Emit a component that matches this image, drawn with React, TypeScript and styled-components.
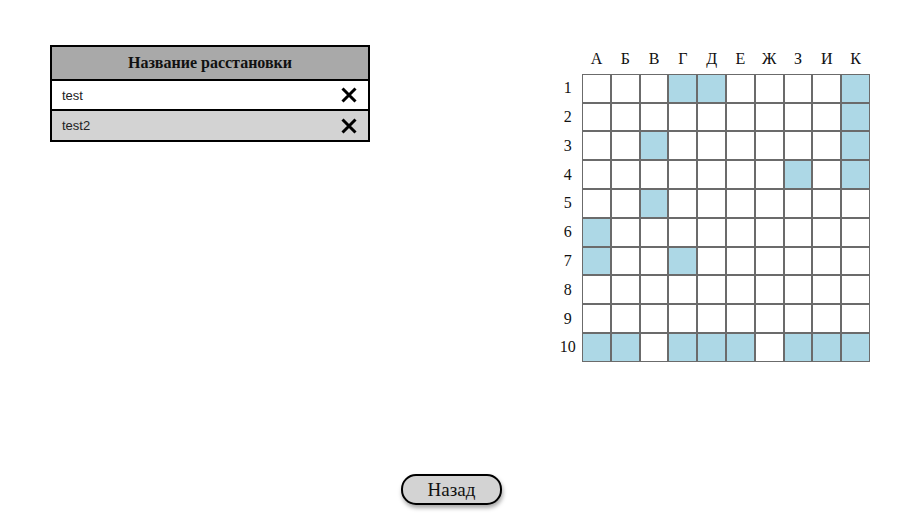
import React from "react";
import styled, { createGlobalStyle } from "styled-components";

const GlobalStyle = createGlobalStyle`
  html, body {
    margin: 0;
    padding: 0;
    background: #ffffff;
    font-family: "Liberation Serif", "Times New Roman", serif;
  }
`;

const colors = {
  header: "#a9a9a9",
  stripe: "#d3d3d3",
  ship: "#add8e6",
  line: "#6b6b6b",
};

const letters = ["А", "Б", "В", "Г", "Д", "Е", "Ж", "З", "И", "К"];

// ship cells, row -> columns (0-based)
const ships: Record<number, number[]> = {
  0: [3, 4, 9],
  1: [9],
  2: [2, 9],
  3: [7, 9],
  4: [2],
  5: [0],
  6: [0, 3],
  9: [0, 1, 3, 4, 5, 7, 8, 9],
};

const placements = ["test", "test2"];

const Page = styled.div`
  min-height: 100vh;
  display: flex;
  flex-direction: column;
  box-sizing: border-box;
`;

const Top = styled.div`
  display: flex;
  justify-content: space-between;
  align-items: flex-start;
  padding: 45px 41px 0 50px;
`;

const List = styled.div`
  width: 320px;
  box-sizing: border-box;
  border: 2px solid #000;
  display: flex;
  flex-direction: column;
`;

const ListHeader = styled.div`
  height: 32px;
  display: flex;
  align-items: center;
  justify-content: center;
  background: ${colors.header};
  border-bottom: 2px solid #000;
  font-family: "Liberation Serif", "Times New Roman", serif;
  font-weight: bold;
  font-size: 16px;
  color: #111;
`;

const ListRow = styled.div<{ $striped: boolean; $last: boolean }>`
  height: ${(p) => (p.$last ? "29px" : "28px")};
  display: flex;
  align-items: center;
  justify-content: space-between;
  padding: 0 11px 0 10px;
  background: ${(p) => (p.$striped ? colors.stripe : "#ffffff")};
  border-bottom: ${(p) => (p.$last ? "none" : "2px solid #000")};
  font-family: "Liberation Sans", Arial, sans-serif;
  font-size: 13px;
  color: #222;
`;

const RemoveButton = styled.button`
  border: none;
  background: none;
  padding: 0;
  width: 16px;
  height: 16px;
  display: flex;
  cursor: pointer;
`;

const Board = styled.div`
  display: grid;
  grid-template-columns: repeat(11, 28.8px);
  grid-auto-rows: 28.8px;
`;

const Label = styled.div`
  display: flex;
  align-items: center;
  justify-content: center;
  font-family: "Liberation Serif", "Times New Roman", serif;
  font-size: 16px;
  color: #111;
`;

const Cell = styled.div<{ $ship: boolean }>`
  box-sizing: border-box;
  border: 1px solid ${colors.line};
  background: ${(p) => (p.$ship ? colors.ship : "#ffffff")};
`;

const Footer = styled.div`
  margin-top: auto;
  display: flex;
  justify-content: center;
  padding: 0 8px 19px 0;
`;

const BackButton = styled.button`
  width: 101px;
  height: 31px;
  border: 2px solid #000;
  border-radius: 15px;
  background: ${colors.stripe};
  box-shadow: 1px 3px 4px rgba(0, 0, 0, 0.35);
  font-family: "Liberation Serif", "Times New Roman", serif;
  font-size: 19px;
  color: #111;
  cursor: pointer;
  padding: 0;
`;

const CrossIcon = () => (
  <svg width="16" height="16" viewBox="0 0 16 16">
    <path d="M1.5 1.5 L14.5 14.5 M14.5 1.5 L1.5 14.5" stroke="#000" strokeWidth="3" />
  </svg>
);

export default function App() {
  return (
    <>
      <GlobalStyle />
      <Page>
        <Top>
          <List>
            <ListHeader>Название расстановки</ListHeader>
            {placements.map((name, i) => (
              <ListRow key={name} $striped={i % 2 === 1} $last={i === placements.length - 1}>
                <span>{name}</span>
                <RemoveButton aria-label="Удалить">
                  <CrossIcon />
                </RemoveButton>
              </ListRow>
            ))}
          </List>
          <Board>
            <Label />
            {letters.map((l) => (
              <Label key={l}>{l}</Label>
            ))}
            {Array.from({ length: 10 }).map((_, r) => (
              <React.Fragment key={r}>
                <Label>{r + 1}</Label>
                {letters.map((l, c) => (
                  <Cell key={l} $ship={(ships[r] || []).includes(c)} />
                ))}
              </React.Fragment>
            ))}
          </Board>
        </Top>
        <Footer>
          <BackButton>Назад</BackButton>
        </Footer>
      </Page>
    </>
  );
}
